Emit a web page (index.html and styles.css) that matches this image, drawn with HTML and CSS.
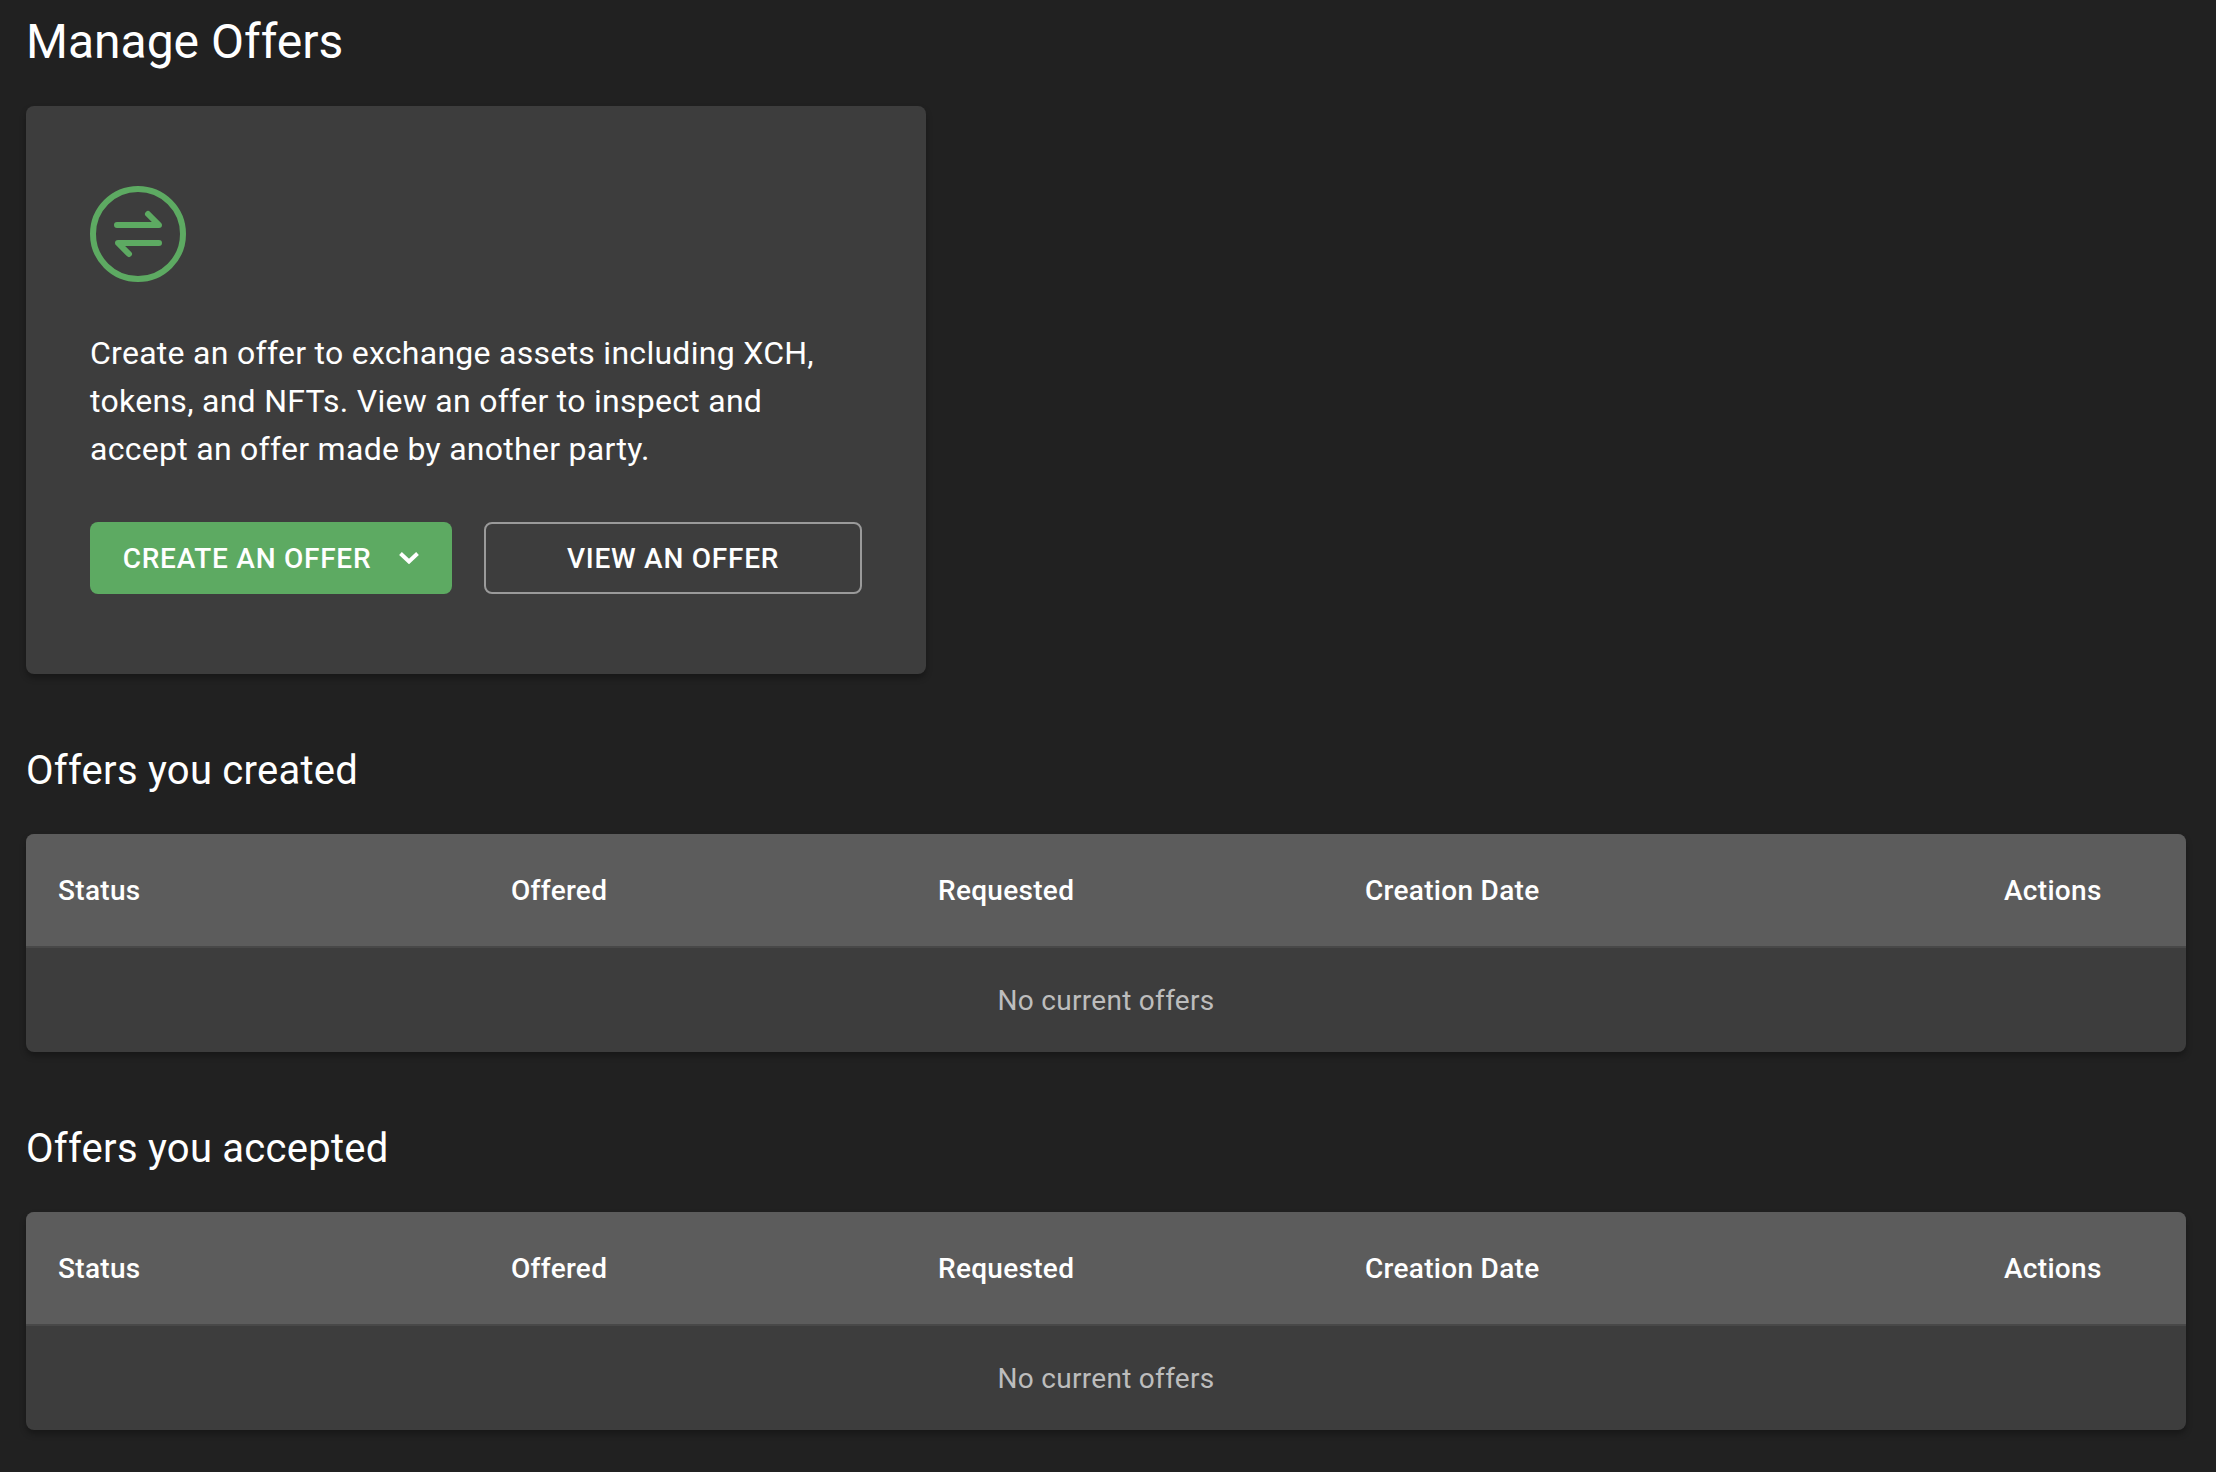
FILE: index.html
```html
<!DOCTYPE html>
<html lang="en">
<head>
    <meta charset="UTF-8">
    <title>Manage Offers</title>
    <link rel="stylesheet" href="styles.css">
</head>
<body>
    <div class="container">
        <h1 class="page-title">Manage Offers</h1>

        <div class="intro-card">
            <svg class="intro-icon" viewBox="0 0 96 96" fill="none" stroke="#5daa62" stroke-width="6" stroke-linecap="round" stroke-linejoin="round">
                <circle cx="48" cy="48" r="45"></circle>
                <path d="M27 39H69L58 28"></path>
                <path d="M69 57H28L39 68"></path>
            </svg>
            <p class="intro-text">Create an offer to exchange assets including XCH, tokens, and NFTs. View an offer to inspect and accept an offer made by another party.</p>
            <div class="intro-actions">
                <button class="btn btn-primary">
                    <span>Create an offer</span>
                    <svg class="btn-chevron" viewBox="0 0 20 12" fill="none" stroke="#fff" stroke-width="4">
                        <path d="M1.5 1.5L10 9.5L18.5 1.5"></path>
                    </svg>
                </button>
                <button class="btn btn-outline">View an offer</button>
            </div>
        </div>

        <h2 class="section-title">Offers you created</h2>
        <table class="offers-table">
            <thead>
                <tr>
                    <th>Status</th>
                    <th>Offered</th>
                    <th>Requested</th>
                    <th>Creation Date</th>
                    <th>Actions</th>
                </tr>
            </thead>
            <tbody>
                <tr>
                    <td colspan="5">No current offers</td>
                </tr>
            </tbody>
        </table>

        <h2 class="section-title">Offers you accepted</h2>
        <table class="offers-table">
            <thead>
                <tr>
                    <th>Status</th>
                    <th>Offered</th>
                    <th>Requested</th>
                    <th>Creation Date</th>
                    <th>Actions</th>
                </tr>
            </thead>
            <tbody>
                <tr>
                    <td colspan="5">No current offers</td>
                </tr>
            </tbody>
        </table>
    </div>
</body>
</html>
```

FILE: styles.css
```css
* {
    margin: 0;
    padding: 0;
    box-sizing: border-box;
    font-family: 'Roboto', sans-serif;
}

html, body {
    height: 100%;
    overflow: hidden;
}

body {
    background-color: #212121;
    color: #fff;
}

.container {
    padding: 14px 30px 0 26px;
}

.page-title {
    font-size: 48px;
    font-weight: 400;
    line-height: 56px;
    margin-bottom: 36px;
}

.intro-card {
    width: 900px;
    height: 568px;
    padding: 80px 64px;
    background-color: #3d3d3d;
    border-radius: 8px;
    box-shadow: 0 4px 6px rgba(0, 0, 0, 0.3);
}

.intro-icon {
    display: block;
    width: 96px;
    height: 96px;
    margin-bottom: 47px;
}

.intro-text {
    font-size: 32px;
    line-height: 48px;
    letter-spacing: 0.28px;
    margin-bottom: 49px;
}

.intro-actions {
    display: flex;
    gap: 32px;
}

.btn {
    display: flex;
    align-items: center;
    justify-content: center;
    height: 72px;
    border-radius: 8px;
    color: #fff;
    font-size: 28px;
    font-weight: 500;
    letter-spacing: 0.75px;
    text-transform: uppercase;
}

.btn-primary {
    width: 362px;
    gap: 28px;
    border: none;
    background-color: #5daa62;
}

.btn-chevron {
    width: 20px;
    height: 12px;
}

.btn-outline {
    width: 378px;
    border: 2px solid #9a9a9a;
    background-color: transparent;
}

.section-title {
    font-size: 40px;
    font-weight: 400;
    line-height: 48px;
    letter-spacing: 0.25px;
    margin-top: 73px;
    margin-bottom: 39px;
}

.offers-table {
    width: 2160px;
    table-layout: fixed;
    border-collapse: separate;
    border-spacing: 0;
    background-color: #3d3d3d;
    border-radius: 8px;
    box-shadow: 0 4px 6px rgba(0, 0, 0, 0.3);
}

.offers-table th {
    height: 114px;
    padding: 1px 32px 0;
    background-color: #5c5c5c;
    border-bottom: 2px solid #484848;
    font-size: 28px;
    font-weight: 500;
    line-height: 40px;
    letter-spacing: 0.3px;
    text-align: left;
}

.offers-table th:nth-child(1) {
    width: 453px;
    border-top-left-radius: 8px;
}

.offers-table th:nth-child(2),
.offers-table th:nth-child(3) {
    width: 427px;
}

.offers-table th:nth-child(4) {
    width: 639px;
}

.offers-table th:nth-child(5) {
    border-top-right-radius: 8px;
}

.offers-table td {
    height: 104px;
    color: #bdbdbd;
    font-size: 28px;
    letter-spacing: 0.3px;
    text-align: center;
}
```
